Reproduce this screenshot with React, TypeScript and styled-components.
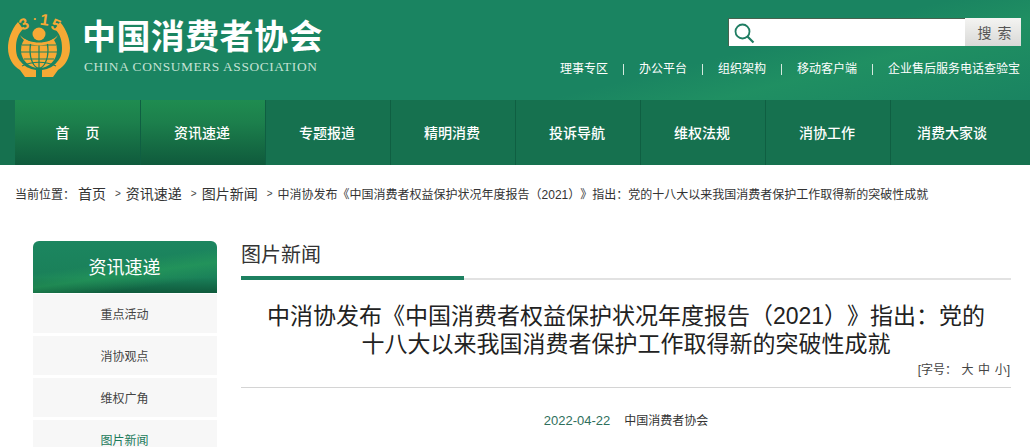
import React from 'react';
import styled, { createGlobalStyle } from 'styled-components';

const FONT = '"Liberation Sans", "Noto Sans CJK SC", sans-serif';

const GlobalStyle = createGlobalStyle`
  html, body {
    margin: 0;
    padding: 0;
    height: 447px;
    overflow: hidden;
    background: #fff;
    font-family: ${FONT};
    text-spacing-trim: space-all;
  }
  * {
    box-sizing: border-box;
  }
`;

const Header = styled.header`
  height: 165px;
  background:
    linear-gradient(166deg, rgba(40, 160, 100, 0) 56%, rgba(40, 160, 100, 0.4) 66%, rgba(40, 160, 100, 0) 84%),
    #1a8461;
`;

const TopBar = styled.div`
  height: 100px;
  display: flex;
  justify-content: space-between;
  padding: 0 9px 0 8px;
`;

const Brand = styled.div`
  display: flex;
  gap: 13px;
  padding-top: 14px;
`;

const BrandText = styled.div`
  display: flex;
  flex-direction: column;
  margin-left: -2px;
`;

const BrandName = styled.div`
  font-size: 34px;
  font-weight: 700;
  line-height: 46px;
  letter-spacing: 0.4px;
  color: #fff;
  white-space: nowrap;
`;

const BrandEnglish = styled.div`
  font-family: 'Liberation Serif', serif;
  font-size: 13.4px;
  line-height: 14px;
  letter-spacing: 0.6px;
  color: #c4e2d4;
  margin-left: 2px;
  white-space: nowrap;
`;

const Tools = styled.div`
  display: flex;
  flex-direction: column;
  align-items: flex-end;
  padding-top: 18px;
`;

const SearchBox = styled.div`
  display: flex;
  width: 293px;
  height: 28px;
`;

const SearchField = styled.div`
  flex: 1;
  display: flex;
  align-items: center;
  padding-left: 4px;
  background: #fff;
  border-top: 1px solid #47624f;
  border-left: 1px solid #47624f;
`;

const SearchButton = styled.div`
  width: 56px;
  display: flex;
  align-items: center;
  justify-content: center;
  gap: 6px;
  padding-left: 3px;
  font-size: 14px;
  color: #555;
  background: linear-gradient(#f4f4f2, #d9d9d7);
`;

const TopLinks = styled.nav`
  display: flex;
  align-items: center;
  margin: 14px 1px 0 0;
  font-size: 12px;
  line-height: 18px;
  color: #fff;
  white-space: nowrap;
`;

const TopDivider = styled.span`
  width: 1px;
  height: 11px;
  margin: 0 15px;
  background: #d5eadf;
`;

const MainNav = styled.nav`
  height: 65px;
  padding: 0 15px;
  display: grid;
  grid-template-columns: repeat(8, 125px);
  background: #16714f;
`;

const NavItem = styled.a<{ $active?: boolean; $first?: boolean }>`
  display: flex;
  align-items: center;
  justify-content: center;
  gap: ${({ $first }) => ($first ? '16px' : '0')};
  padding: 0 ${({ $first }) => ($first ? '0' : '2px')} 2px 0;
  font-size: 14px;
  font-weight: 500;
  color: #fff;
  border-left: ${({ $first }) => ($first ? 'none' : '1px solid #0f5f42')};
  background: ${({ $active, $first }) =>
    $active || $first ? 'linear-gradient(#1f8c50, #1c7f4c 35%, #0f5a3c)' : 'none'};
`;

const Crumbs = styled.div`
  display: flex;
  align-items: center;
  height: 18px;
  margin: 19px 0 0 15px;
  font-size: 14px;
  color: #333;
  white-space: nowrap;
`;

const CrumbLabel = styled.span`
  font-size: 12px;
  margin-right: 3px;
`;

const CrumbArrow = styled.span`
  margin: 0 5px 0 9px;
  font-size: 10px;
  color: #444;
`;

const CrumbTitle = styled.span`
  font-size: 12px;
`;

const Body = styled.div`
  display: flex;
  gap: 24px;
  padding: 39px 19px 0 33px;
`;

const Sidebar = styled.aside`
  width: 184px;
  flex: none;
`;

const SideHead = styled.div`
  height: 52px;
  display: flex;
  align-items: center;
  justify-content: center;
  padding: 0 1px 2px 0;
  font-size: 18px;
  color: #fff;
  border-radius: 6px 6px 0 0;
  background:
    linear-gradient(172deg, rgba(40, 160, 90, 0) 42%, rgba(40, 160, 90, 0.55) 60%, rgba(40, 160, 90, 0) 80%),
    linear-gradient(#1c8660, #1a8059 70%, #0f5a3c);
`;

const SideList = styled.ul`
  list-style: none;
  margin: 1px 0 0;
  padding: 0;
`;

const SideItem = styled.li<{ $active?: boolean }>`
  height: 39px;
  margin-bottom: 3px;
  padding: 0 1px 1px 0;
  display: flex;
  align-items: center;
  justify-content: center;
  font-size: 12px;
  color: ${({ $active }) => ($active ? '#1a7a5a' : '#444')};
  background: #f7f7f7;
`;

const Main = styled.main`
  flex: 1;
  min-width: 0;
`;

const SectionTitle = styled.h2`
  margin: 0;
  height: 39px;
  font-size: 20px;
  font-weight: 400;
  line-height: 28px;
  color: #333;
  border-bottom: 2px solid #e2e2e2;
  position: relative;

  &::after {
    content: '';
    position: absolute;
    left: 0;
    bottom: -2px;
    width: 223px;
    height: 4px;
    background: #1d8060;
  }
`;

const ArticleTitle = styled.h1`
  margin: 22px 0 0;
  font-size: 23px;
  font-weight: 400;
  line-height: 28px;
  text-align: center;
  color: #222;
`;

const FontSizer = styled.div`
  margin: 4px 1px 0 0;
  height: 25px;
  font-size: 12px;
  line-height: 16px;
  text-align: right;
  color: #444;
  word-spacing: 1.2px;
`;

const ArticleMeta = styled.div`
  display: flex;
  justify-content: center;
  gap: 14px;
  padding-top: 24px;
  border-top: 1px solid #d4d4d4;
  font-size: 12px;
  line-height: 18px;
  color: #333;
`;

const MetaDate = styled.span`
  font-size: 13px;
  color: #2f6f5c;
`;

const NAV = ['专题报道', '精明消费', '投诉导航', '维权法规', '消协工作', '消费大家谈'];
const TOP_LINKS = ['理事专区', '办公平台', '组织架构', '移动客户端', '企业售后服务电话查验宝'];

const ORANGE = '#f6a935';
const GREEN = '#1a8461';

const LogoMark = styled.svg`
  flex: none;
  overflow: visible;
`;

const Logo = () => (
  <LogoMark width="63" height="64" viewBox="0 0 63 64">
    <g fill={ORANGE}>
      <path d="M10 8 C3 16 0 26 0 34 C0 44 5 52 12 56 L17 63 L28 63 L28 56 C21 55 16 52 13 48 C9 44 8 39 8 34 C8 26 10 20 15 15Z" />
      <path d="M52 8 C59 16 62 26 62 34 C62 44 57 52 50 56 L45 63 L34 63 L34 56 C41 55 46 52 49 48 C53 44 54 39 54 34 C54 26 52 20 47 15Z" />
      <circle cx="31" cy="36" r="18" />
    </g>
    <g fill="none" stroke={GREEN} strokeWidth="1.2">
      <ellipse cx="31" cy="36" rx="9" ry="18" />
      <path d="M31 24 V63 M14 31 H48 M13 38 H49 M16 45 H46" />
      <path d="M14 52 C24 47 38 47 48 52" />
    </g>
    <path d="M12 21 C20 13 42 13 50 21 C44 27 38 29 31 29 C24 29 18 27 12 21Z" fill={GREEN} />
    <path d="M12 21 C20 31 42 31 50 21 C43 35 19 35 12 21Z" fill={ORANGE} />
    <circle cx="31" cy="20" r="6.5" fill={ORANGE} />
    <g fill={ORANGE} fontFamily="Liberation Sans, sans-serif" fontWeight="700" fontSize="16" textAnchor="middle">
      <text x="18" y="15" transform="rotate(-24 18 15)">3</text>
      <text x="27" y="9" fontSize="12">·</text>
      <text x="36" y="11" transform="rotate(8 36 11)">1</text>
      <text x="46" y="16" transform="rotate(22 46 16)">5</text>
    </g>
  </LogoMark>
);

export default function App() {
  return (
    <>
      <GlobalStyle />
      <Header>
        <TopBar>
          <Brand>
            <Logo />
            <BrandText>
              <BrandName>中国消费者协会</BrandName>
              <BrandEnglish>CHINA CONSUMERS ASSOCIATION</BrandEnglish>
            </BrandText>
          </Brand>
          <Tools>
            <SearchBox>
              <SearchField>
                <svg width="22" height="22" viewBox="0 0 22 22" fill="none" stroke="#1f7d62" strokeWidth="1.8">
                  <circle cx="9.5" cy="9.5" r="7" />
                  <path d="M14.5 14.5 L20.5 20.5" strokeWidth="2.2" />
                </svg>
              </SearchField>
              <SearchButton>
                <span>搜</span>
                <span>索</span>
              </SearchButton>
            </SearchBox>
            <TopLinks>
              {TOP_LINKS.map((link, i) => (
                <React.Fragment key={link}>
                  {i > 0 && <TopDivider />}
                  <span>{link}</span>
                </React.Fragment>
              ))}
            </TopLinks>
          </Tools>
        </TopBar>
        <MainNav>
          <NavItem $first>
            <span>首</span>
            <span>页</span>
          </NavItem>
          <NavItem $active>资讯速递</NavItem>
          {NAV.map((item) => (
            <NavItem key={item}>{item}</NavItem>
          ))}
        </MainNav>
      </Header>
      <Crumbs>
        <CrumbLabel>当前位置：</CrumbLabel>
        <span>首页</span>
        <CrumbArrow>&gt;</CrumbArrow>
        <span>资讯速递</span>
        <CrumbArrow>&gt;</CrumbArrow>
        <span>图片新闻</span>
        <CrumbArrow>&gt;</CrumbArrow>
        <CrumbTitle>中消协发布《中国消费者权益保护状况年度报告（2021）》指出：党的十八大以来我国消费者保护工作取得新的突破性成就</CrumbTitle>
      </Crumbs>
      <Body>
        <Sidebar>
          <SideHead>资讯速递</SideHead>
          <SideList>
            <SideItem>重点活动</SideItem>
            <SideItem>消协观点</SideItem>
            <SideItem>维权广角</SideItem>
            <SideItem $active>图片新闻</SideItem>
          </SideList>
        </Sidebar>
        <Main>
          <SectionTitle>图片新闻</SectionTitle>
          <ArticleTitle>
            中消协发布《中国消费者权益保护状况年度报告（2021）》指出：党的
            <br />
            十八大以来我国消费者保护工作取得新的突破性成就
          </ArticleTitle>
          <FontSizer>[字号： 大 中 小]</FontSizer>
          <ArticleMeta>
            <MetaDate>2022-04-22</MetaDate>
            <span>中国消费者协会</span>
          </ArticleMeta>
        </Main>
      </Body>
    </>
  );
}
